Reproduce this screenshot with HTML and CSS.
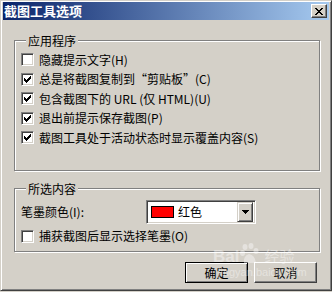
FILE: index.html
```html
<!DOCTYPE html>
<html lang="zh-CN">
<head>
    <meta charset="UTF-8">
    <meta name="viewport" content="width=device-width, initial-scale=1.0">
    <title>截图工具选项</title>
    <link rel="stylesheet" href="styles.css">
</head>
<body>

  <div class="window">
    <div class="titlebar">
      <span class="title-text">截图工具选项</span>
      <span class="close-btn">
        <svg width="8" height="7" viewBox="0 0 8 7" shape-rendering="crispEdges">
          <path d="M0 0h2v1h-2zM6 0h2v1h-2zM1 1h2v1h-2zM5 1h2v1h-2zM2 2h4v1h-4zM3 3h2v1h-2zM2 4h4v1h-4zM1 5h2v1h-2zM5 5h2v1h-2zM0 6h2v1h-2zM6 6h2v1h-2z" fill="#000"/>
        </svg>
      </span>
    </div>

    <fieldset class="group group-app">
      <legend>应用程序</legend>
      <div class="check-row">
        <span class="box"></span>
        <span class="label">隐藏提示文字(H)</span>
      </div>
      <div class="check-row">
        <span class="box checked"></span>
        <span class="label">总是将截图复制到“剪贴板”(C)</span>
      </div>
      <div class="check-row">
        <span class="box checked"></span>
        <span class="label">包含截图下的 URL (仅 HTML)(U)</span>
      </div>
      <div class="check-row">
        <span class="box checked"></span>
        <span class="label">退出前提示保存截图(P)</span>
      </div>
      <div class="check-row">
        <span class="box checked"></span>
        <span class="label">截图工具处于活动状态时显示覆盖内容(S)</span>
      </div>
    </fieldset>

    <fieldset class="group group-sel">
      <legend>所选内容</legend>
      <div class="color-row">
        <span class="color-label">笔墨颜色(I):</span>
        <div class="combo">
          <span class="swatch"></span>
          <span class="combo-text">红色</span>
          <span class="combo-btn">
            <svg width="7" height="4" viewBox="0 0 7 4" shape-rendering="crispEdges">
              <path d="M0 0h7v1h-7zM1 1h5v1h-5zM2 2h3v1h-3zM3 3h1v1h-1z" fill="#000"/>
            </svg>
          </span>
        </div>
      </div>
      <div class="check-row">
        <span class="box"></span>
        <span class="label">捕获截图后显示选择笔墨(O)</span>
      </div>
    </fieldset>

    <div class="buttons">
      <button class="btn btn-default">确定</button>
      <button class="btn">取消</button>
    </div>

    <!-- baidu jingyan watermark from the screenshot -->
    <div class="watermark">
      <div class="wm-top">
        <span class="wm-bai">Bai</span>
        <svg class="wm-paw" width="20" height="22" viewBox="0 0 20 22">
          <ellipse cx="5" cy="4" rx="2.5" ry="3" fill="#fff"/>
          <ellipse cx="11" cy="3" rx="2.5" ry="3" fill="#fff"/>
          <ellipse cx="2.5" cy="10" rx="2.5" ry="3" fill="#fff"/>
          <ellipse cx="16" cy="8" rx="2.5" ry="3" fill="#fff"/>
          <path d="M4 20 Q3 13 9 11 Q15 12 16 20 Z" fill="#fff"/>
        </svg>
        <span class="wm-jy">经验</span>
      </div>
      <div class="wm-url">jingyan.baidu.com</div>
    </div>
  </div>

</body>
</html>
```

FILE: styles.css
```css
body {
  margin: 0;
  background-color: #d4d0c8;
  font-family: "Noto Sans CJK SC", "Noto Sans", sans-serif;
  font-size: 12px;
  color: #000;
}

.window {
  position: relative;
  width: 332px;
  height: 291px;
  box-sizing: border-box;
  padding: 1px 2px 2px 2px;
  border: 1px solid;
  border-color: #d4d0c8 #404040 #404040 #d4d0c8;
  box-shadow: inset 1px 1px #fff, inset -1px -1px #808080;
  background-color: #d4d0c8;
  overflow: hidden;
}

.titlebar {
  height: 18px;
  display: flex;
  justify-content: space-between;
  align-items: center;
  padding: 0 2px 0 1px;
  background: linear-gradient(to right, #0a246a, #a6caf0);
}

.title-text {
  color: #fff;
  font-weight: bold;
  font-size: 13px;
  line-height: 18px;
}

.close-btn {
  width: 16px;
  height: 14px;
  box-sizing: border-box;
  display: flex;
  justify-content: center;
  align-items: center;
  background-color: #d4d0c8;
  border: 1px solid;
  border-color: #fff #404040 #404040 #fff;
  box-shadow: inset -1px -1px #808080;
}

/* group boxes */
.group {
  box-sizing: border-box;
  width: 306px;
  margin: 0 0 0 11px;
  padding: 0 0 0 6px;
  border: 1px solid #808080;
  box-shadow: inset 1px 1px #fff, 1px 1px #fff;
}

.group legend {
  margin-left: 5px;
  padding: 0 2px;
  line-height: 15px;
  background-color: #d4d0c8;
}

.group-app {
  margin-top: 13px;
  height: 138px;
  padding-top: 2px;
}

.group-sel {
  margin-top: 10px;
  height: 71px;
}

.check-row {
  height: 19.5px;
  display: flex;
  align-items: center;
}

.group-sel .check-row {
  margin-top: 2px;
  height: 20px;
}

.box {
  width: 13px;
  height: 13px;
  box-sizing: border-box;
  flex-shrink: 0;
  margin-right: 5px;
  background-color: #fff;
  border: 1px solid;
  border-color: #808080 #fff #fff #808080;
  box-shadow: inset 1px 1px #404040, inset -1px -1px #d4d0c8;
}

.box.checked {
  background: #fff url("data:image/svg+xml;utf8,<svg xmlns='http://www.w3.org/2000/svg' width='7' height='7' shape-rendering='crispEdges'><path d='M0 2h1v3h-1zM1 3h1v3h-1zM2 4h1v3h-1zM3 3h1v3h-1zM4 2h1v3h-1zM5 1h1v3h-1zM6 0h1v3h-1z' fill='black'/></svg>") no-repeat 2px 2px;
}

.label {
  white-space: nowrap;
  line-height: 16px;
}

/* colour picker row */
.color-row {
  margin-top: 4px;
  display: flex;
  align-items: center;
}

.color-label {
  width: 125px;
  line-height: 16px;
}

.combo {
  width: 110px;
  height: 24px;
  box-sizing: border-box;
  display: flex;
  align-items: center;
  background-color: #fff;
  border: 1px solid;
  border-color: #808080 #fff #fff #808080;
  box-shadow: inset 1px 1px #404040, inset -1px -1px #d4d0c8;
  padding: 1px;
}

.swatch {
  width: 23px;
  height: 12px;
  box-sizing: border-box;
  margin-left: 3px;
  border: 1px solid #000;
  background-color: #ff0000;
}

.combo-text {
  margin-left: 4px;
  flex: 1;
  line-height: 16px;
}

.combo-btn {
  width: 16px;
  height: 20px;
  box-sizing: border-box;
  display: flex;
  justify-content: center;
  align-items: center;
  margin-right: 1px;
  background-color: #d4d0c8;
  border: 1px solid;
  border-color: #d4d0c8 #404040 #404040 #d4d0c8;
  box-shadow: inset 1px 1px #fff, inset -1px -1px #808080;
}

/* dialog buttons */
.buttons {
  margin-top: 10px;
  padding-right: 12px;
  display: flex;
  justify-content: flex-end;
  gap: 6px;
}

.btn {
  width: 63px;
  height: 21px;
  box-sizing: border-box;
  padding: 0;
  font-family: "Noto Sans CJK SC", "Noto Sans", sans-serif;
  font-size: 12px;
  color: #000;
  background-color: #d4d0c8;
  border: 1px solid;
  border-color: #fff #404040 #404040 #fff;
  box-shadow: inset -1px -1px #808080;
}

.btn-default {
  border-color: #000;
  box-shadow: inset 1px 1px #fff, inset -1px -1px #808080;
}

.watermark {
  position: absolute;
  left: 212px;
  top: 238px;
  color: #fff;
  opacity: 0.4;
  pointer-events: none;
}

.wm-top {
  display: flex;
  align-items: flex-end;
  height: 26px;
}

.wm-bai {
  font-family: "Liberation Sans", sans-serif;
  font-size: 17px;
  font-weight: bold;
  line-height: 17px;
}

.wm-paw {
  margin: 0 4px 0 1px;
}

.wm-jy {
  font-size: 15px;
  line-height: 18px;
}

.wm-url {
  margin-left: 5px;
  font-family: "Liberation Sans", sans-serif;
  font-size: 11px;
  line-height: 14px;
}
```
